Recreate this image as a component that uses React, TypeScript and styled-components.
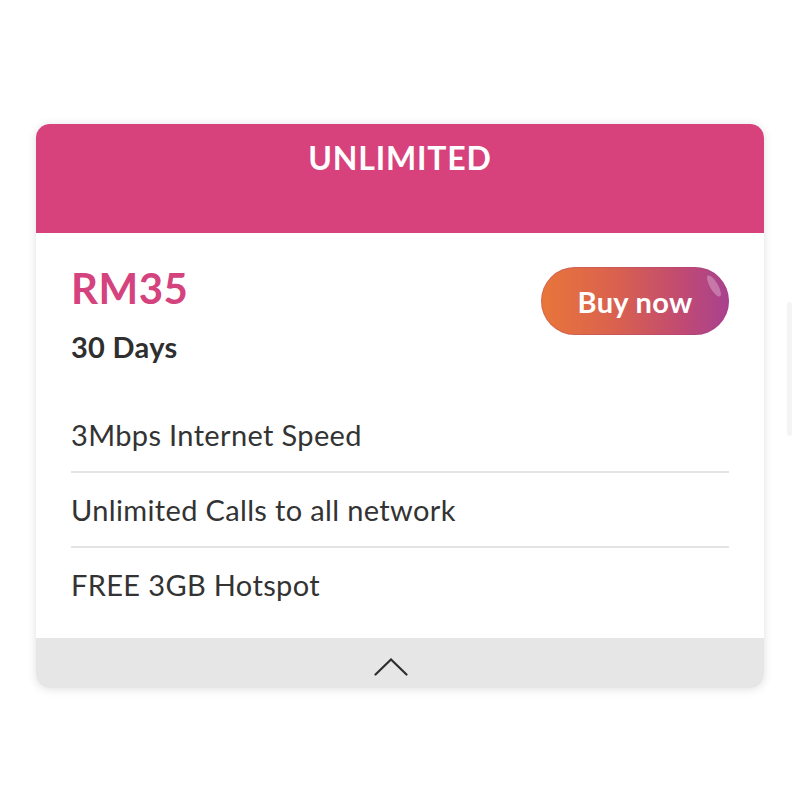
import React from "react";
import styled, { createGlobalStyle } from "styled-components";

const Global = createGlobalStyle`
  html, body {
    margin: 0;
    padding: 0;
    background: #ffffff;
    font-family: Lato, "Open Sans", sans-serif;
  }
  * { box-sizing: border-box; }
`;

const Page = styled.div`
  padding: 124px 36px 0 36px;
  width: 800px;
  height: 800px;
  position: relative;
`;

const Card = styled.div`
  width: 728px;
  border-radius: 14px;
  overflow: hidden;
  background: #fff;
  box-shadow: 0 1px 10px rgba(0, 0, 0, 0.13);
`;

const Header = styled.div`
  height: 109px;
  padding-top: 14.5px;
  background: #d7417c;
  display: flex;
  justify-content: center;
  align-items: flex-start;
`;

const Title = styled.h1`
  margin: 0;
  color: #fff;
  font-size: 32px;
  line-height: 38px;
  font-weight: 700;
  letter-spacing: 0.8px;
`;

const Body = styled.div`
  padding: 30px 35px 17px 35px;
`;

const TopRow = styled.div`
  display: flex;
  justify-content: space-between;
  align-items: flex-start;
`;

const PriceBlock = styled.div`
  display: flex;
  flex-direction: column;
  gap: 16px;
`;

const Price = styled.div`
  color: #d4437e;
  font-size: 42px;
  line-height: 50px;
  font-weight: 700;
  letter-spacing: 0.5px;
`;

const Validity = styled.div`
  color: #2f2f2f;
  font-size: 29px;
  line-height: 35px;
  font-weight: 700;
  letter-spacing: 0.3px;
`;

const BuyButton = styled.button`
  position: relative;
  margin-top: 4px;
  width: 188px;
  height: 68px;
  border: none;
  border-radius: 34px;
  overflow: hidden;
  background: linear-gradient(90deg, #e8763a 0%, #d9614f 40%, #c04a72 75%, #a8418f 100%);
  color: #fff;
  font-family: Lato, "Open Sans", sans-serif;
  font-size: 29px;
  font-weight: 700;
  letter-spacing: 0.3px;
  cursor: pointer;
  box-shadow: inset 0 0 0 1px rgba(160, 60, 120, 0.25);

  &::after {
    content: "";
    position: absolute;
    right: 11px;
    top: 7px;
    width: 8px;
    height: 24px;
    border-radius: 50%;
    background: rgba(255, 255, 255, 0.28);
    transform: rotate(-30deg);
  }
`;

const Features = styled.ul`
  list-style: none;
  margin: 34px 0 0 0;
  padding: 0;
`;

const Feature = styled.li<{ $last?: boolean }>`
  padding: 19px 0 19px;
  border-bottom: ${(p) => (p.$last ? "none" : "2px solid #e4e4e4")};
  color: #333;
  font-size: 29px;
  line-height: 35px;
  font-weight: 400;
  letter-spacing: 0.35px;
`;

const Footer = styled.div`
  height: 50px;
  background: #e6e6e6;
  display: flex;
  justify-content: center;
  padding: 20px 18px 0 0;
`;

const ScrollThumb = styled.div`
  position: absolute;
  right: 8px;
  top: 302px;
  width: 5px;
  height: 134px;
  border-radius: 3px;
  background: #f4f4f4;
`;

const features = [
  "3Mbps Internet Speed",
  "Unlimited Calls to all network",
  "FREE 3GB Hotspot",
];

export default function App() {
  return (
    <>
      <Global />
      <Page>
        <Card>
          <Header>
            <Title>UNLIMITED</Title>
          </Header>
          <Body>
            <TopRow>
              <PriceBlock>
                <Price>RM35</Price>
                <Validity>30 Days</Validity>
              </PriceBlock>
              <BuyButton>Buy now</BuyButton>
            </TopRow>
            <Features>
              {features.map((f, i) => (
                <Feature key={f} $last={i === features.length - 1}>
                  {f}
                </Feature>
              ))}
            </Features>
          </Body>
          <Footer>
            <svg width="34" height="18" viewBox="0 0 34 18" fill="none">
              <polyline
                points="1.5,16.5 17,1.5 32.5,16.5"
                stroke="#2e2e2e"
                strokeWidth="2.2"
                strokeLinecap="round"
                strokeLinejoin="miter"
              />
            </svg>
          </Footer>
        </Card>
        <ScrollThumb />
      </Page>
    </>
  );
}
